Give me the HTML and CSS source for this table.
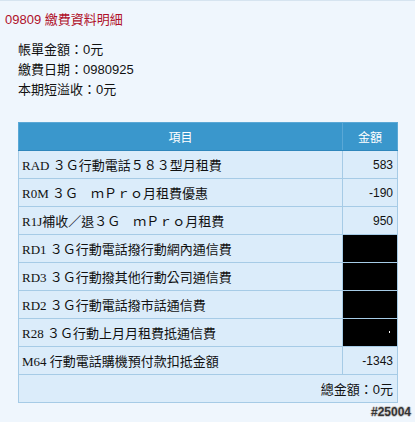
FILE: index.html
```html
<!DOCTYPE html>
<html>
<head>
<meta charset="utf-8">
<link rel="stylesheet" href="styles.css">
</head>
<body>
<div class="page">
  <div class="title">09809 繳費資料明細</div>
  <div class="info">
    <div class="line">帳單金額：0元</div>
    <div class="line">繳費日期：0980925</div>
    <div class="line">本期短溢收：0元</div>
  </div>
  <table class="bill">
    <thead>
      <tr><th class="item">項目</th><th class="amt">金額</th></tr>
    </thead>
    <tbody>
      <tr><td class="desc">RAD ３Ｇ行動電話５８３型月租費</td><td class="num">583</td></tr>
      <tr><td class="desc">R0M ３Ｇ　ｍＰｒｏ月租費優惠</td><td class="num">-190</td></tr>
      <tr><td class="desc">R1J補收／退３Ｇ　ｍＰｒｏ月租費</td><td class="num">950</td></tr>
      <tr><td class="desc">RD1 ３Ｇ行動電話撥行動網內通信費</td><td class="num black"></td></tr>
      <tr><td class="desc">RD3 ３Ｇ行動撥其他行動公司通信費</td><td class="num black"></td></tr>
      <tr><td class="desc">RD2 ３Ｇ行動電話撥市話通信費</td><td class="num black"></td></tr>
      <tr><td class="desc">R28 ３Ｇ行動上月月租費抵通信費</td><td class="num black"><span class="mark"></span></td></tr>
      <tr><td class="desc">M64 行動電話購機預付款扣抵金額</td><td class="num">-1343</td></tr>
      <tr><td class="total" colspan="2">總金額：0元</td></tr>
    </tbody>
  </table>
  <div class="tag">#25004</div>
</div>
</body>
</html>
```

FILE: styles.css
```css
html, body {
  margin: 0;
  padding: 0;
  background: #eff6fd;
}
.page {
  width: 415px;
  height: 422px;
  box-sizing: border-box;
  border-top: 1px solid #d6e4f0;
  font-family: "Liberation Sans", "Noto Sans CJK TC", sans-serif;
  font-size: 12px;
  color: #111;
  position: relative;
}
.title {
  color: #b0102a;
  font-size: 13px;
  padding: 9px 0 0 5px;
  height: 20px;
  line-height: 20px;
}
.info {
  padding: 10px 0 0 18px;
}
.info .line {
  height: 20px;
  line-height: 20px;
  font-size: 13px;
}
.bill {
  margin: 22px 0 0 18px;
  border-collapse: collapse;
  width: 380px;
}
.bill th {
  background: #3a97cc;
  color: #fff;
  font-weight: normal;
  font-size: 12px;
  height: 27px;
  padding: 0;
  border: 1px solid #5aa8d6;
  border-bottom-color: #2f86bb;
}
.bill .amt {
  width: 54px;
}
.bill td {
  background: #dbecfa;
  border: 1px solid #a6cbe6;
  height: 27px;
  padding: 0;
}
.bill .desc {
  font-family: "Liberation Serif", "Noto Sans CJK TC", serif;
  font-size: 13px;
  padding-left: 3px;
  white-space: nowrap;
}
.bill .num {
  text-align: right;
  padding-right: 4px;
  font-family: "Liberation Sans", sans-serif;
  font-size: 12px;
}
.bill .black {
  background: #000;
  position: relative;
}
.mark {
  position: absolute;
  right: 7px;
  top: 12px;
  width: 1px;
  height: 2px;
  background: #fff;
}
.bill .total {
  text-align: right;
  padding-right: 4px;
  font-size: 13px;
}
.tag {
  position: absolute;
  right: 4px;
  bottom: 3px;
  font-family: "Liberation Sans", sans-serif;
  font-weight: bold;
  font-size: 12px;
  color: #333;
  text-shadow: 1px 0 0 #ccc, -1px 0 0 #ccc, 0 1px 0 #ccc, 0 -1px 0 #ccc;
}
```
